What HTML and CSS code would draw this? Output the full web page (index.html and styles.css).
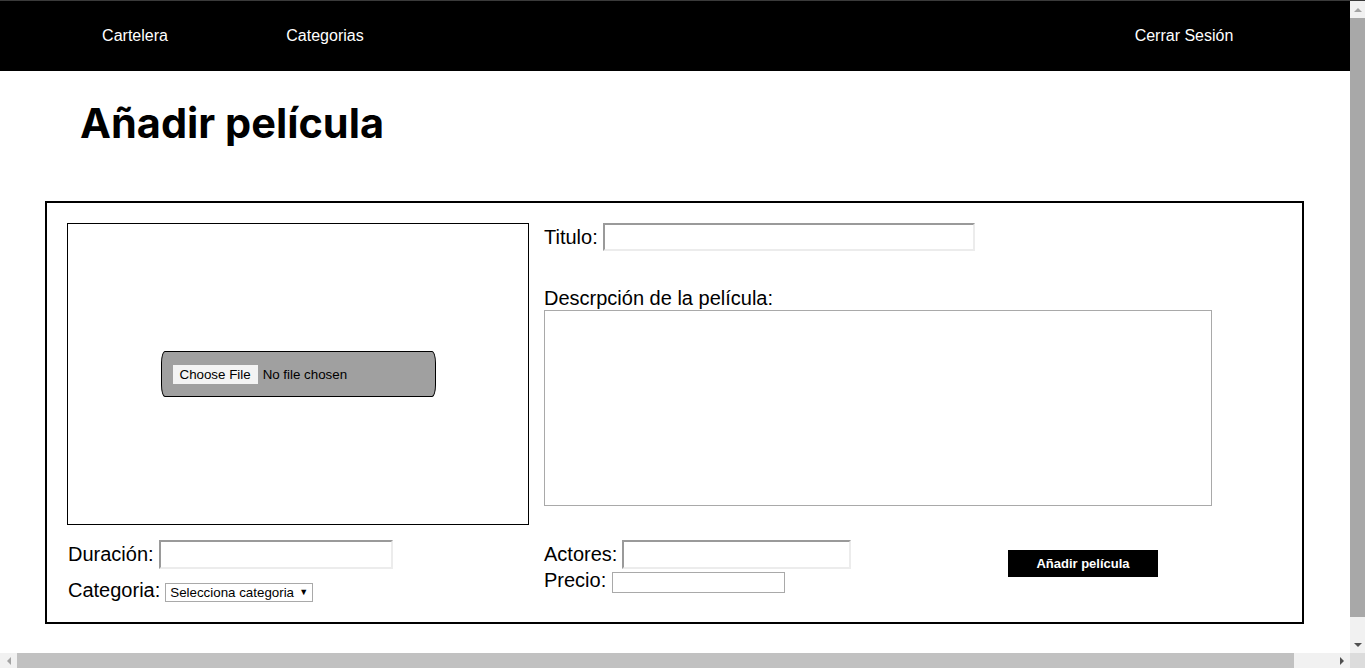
FILE: index.html
```html
<!DOCTYPE html>
<html lang="es">
<head>
<meta charset="utf-8">
<title>Añadir película</title>
<link rel="stylesheet" href="styles.css">
</head>
<body>
<div class="page">
  <nav class="nav">
    <ul class="nav-list">
      <li class="nav-item"><a href="#">Cartelera</a></li>
      <li class="nav-item"><a href="#">Categorias</a></li>
      <li class="nav-item nav-logout"><a href="#">Cerrar Sesión</a></li>
    </ul>
  </nav>
  <h1 class="title">Añadir película</h1>
  <form class="card">
    <div class="image-box">
      <div class="file-wrap">
        <input type="file" class="file-input">
      </div>
    </div>
    <div class="main-fields">
      <div class="row">
        <label>Titulo:</label>
        <input type="text" class="inset-input title-input">
      </div>
      <label class="desc-label">Descrpción de la película:</label>
      <textarea class="desc"></textarea>
    </div>
    <div class="bottom-left">
      <div class="row">
        <label>Duración:</label>
        <input type="text" class="inset-input dur-input">
      </div>
      <div class="row row-cat">
        <label>Categoria:</label>
        <span class="select-wrap">
          <select class="select">
            <option>Selecciona categoria</option>
          </select>
        </span>
      </div>
    </div>
    <div class="bottom-mid">
      <div class="row">
        <label>Actores:</label>
        <input type="text" class="inset-input act-input">
      </div>
      <div class="row row-price">
        <label>Precio:</label>
        <input type="text" class="flat-input">
      </div>
    </div>
    <div class="bottom-right">
      <button type="button" class="submit">Añadir película</button>
    </div>
  </form>
</div>

<div class="vscroll" aria-hidden="true">
  <div class="sb-btn"><span class="arrow arrow-up"></span></div>
  <div class="sb-track sb-track-v"><div class="sb-thumb-v"></div></div>
  <div class="sb-btn"><span class="arrow arrow-down"></span></div>
</div>
<div class="hscroll" aria-hidden="true">
  <div class="sb-btn-h"><span class="arrow arrow-left"></span></div>
  <div class="sb-track sb-track-h"><div class="sb-thumb-h"></div></div>
  <div class="sb-btn-h"><span class="arrow arrow-right"></span></div>
</div>
<div class="sb-corner" aria-hidden="true"></div>
</body>
</html>
```

FILE: styles.css
```css
html {
  background: #fff;
  overflow: hidden;
}
body {
  margin: 0;
  border-top: 1px solid #3a3a3a;
  font-family: "Liberation Sans", Arial, sans-serif;
  color: #000;
}
.page {
  width: 1391px;
  padding-bottom: 48px;
}
.nav {
  background: #000;
  height: 70px;
}
.nav-list {
  list-style: none;
  margin: 0;
  padding: 0 112px 0 40px;
  height: 100%;
  display: flex;
  align-items: center;
}
.nav-item {
  width: 190px;
  text-align: center;
  font-size: 16px;
}
.nav-item a {
  color: #fff;
  text-decoration: none;
}
.nav-logout {
  margin-left: auto;
}
.title {
  margin: 28px 0 54px 80px;
  font-family: Inter, "Noto Sans", sans-serif;
  font-weight: 700;
  font-size: 41.5px;
  line-height: 48px;
  letter-spacing: 0;
}
.card {
  margin-left: 45px;
  width: 1259px;
  box-sizing: border-box;
  border: 2px solid #000;
  padding: 20px;
  display: grid;
  grid-template-columns: 462px 449px 1fr;
  column-gap: 15px;
  row-gap: 15px;
}
.image-box {
  height: 302px;
  box-sizing: border-box;
  border: 1px solid #000;
  display: flex;
  align-items: center;
  justify-content: center;
}
.file-wrap {
  width: 275px;
  height: 46px;
  box-sizing: border-box;
  background: #a0a0a0;
  border: 1px solid #000;
  border-radius: 4px / 12px;
  display: flex;
  align-items: center;
  padding-left: 11px;
  padding-top: 1px;
}
.file-input {
  font-family: "Liberation Sans", Arial, sans-serif;
  font-size: 13.33px;
  color: #000;
  width: 250px;
}
.file-input::file-selector-button {
  font-family: "Liberation Sans", Arial, sans-serif;
  font-size: 13.33px;
  background: #f3f3f3;
  border: none;
  border-radius: 0;
  height: 19px;
  padding: 0 7px;
  margin-right: 5px;
  color: #000;
}
.main-fields {
  grid-column: 2 / 4;
  display: flex;
  flex-direction: column;
  align-items: flex-start;
}
.row {
  display: flex;
  align-items: center;
  gap: 5px;
  font-size: 20px;
  line-height: 23px;
}
.row label {
  white-space: nowrap;
}
.inset-input {
  box-sizing: border-box;
  height: 28px;
  border: 2px solid;
  border-color: #9a9a9a #ececec #ececec #9a9a9a;
  background: #fff;
  padding: 0 4px;
  outline: none;
}
.title-input {
  width: 372px;
}
.desc-label {
  margin-top: 36px;
  font-size: 20px;
  line-height: 23px;
}
.desc {
  display: block;
  width: 668px;
  height: 196px;
  box-sizing: border-box;
  border: 1px solid #a9a9a9;
  resize: none;
  margin: 0;
}
.bottom-left {
  padding-left: 1px;
}
.dur-input {
  width: 234px;
  height: 29px;
}
.row-cat {
  margin-top: 10px;
}
.select-wrap {
  position: relative;
  display: inline-block;
  margin-top: 3px;
}
.select {
  appearance: none;
  -webkit-appearance: none;
  width: 148px;
  height: 19px;
  box-sizing: border-box;
  border: 1px solid #a9a9a9;
  border-radius: 0;
  background: #fff;
  font-family: "Liberation Sans", Arial, sans-serif;
  font-size: 13.33px;
  color: #000;
  padding: 0 0 0 4px;
  display: block;
}
.select-wrap::after {
  content: "\25BC";
  position: absolute;
  right: 5px;
  top: 3px;
  font-size: 9px;
  line-height: 12px;
  color: #000;
  pointer-events: none;
}
.act-input {
  width: 229px;
  height: 29px;
}
.row-price {
  gap: 6px;
  align-items: flex-end;
}
.flat-input {
  box-sizing: border-box;
  width: 173px;
  height: 21px;
  border: 1px solid #a9a9a9;
  background: #fff;
  margin-bottom: -1px;
}
.bottom-right {
  padding-top: 10px;
}
.submit {
  width: 150px;
  height: 27px;
  background: #000;
  color: #fff;
  border: none;
  font-family: "Liberation Sans", Arial, sans-serif;
  font-weight: 700;
  font-size: 13px;
  padding: 0;
  display: block;
}

/* fake browser scrollbars (overlay) */
.vscroll {
  position: fixed;
  top: 1px;
  right: 0;
  width: 15px;
  height: 652px;
  background: #f1f1f1;
  display: flex;
  flex-direction: column;
}
.hscroll {
  position: fixed;
  left: 0;
  bottom: 0;
  width: 1350px;
  height: 15px;
  background: #f1f1f1;
  display: flex;
}
.sb-corner {
  position: fixed;
  right: 0;
  bottom: 0;
  width: 15px;
  height: 15px;
  background: #dcdcdc;
}
.sb-btn {
  height: 17px;
  flex: none;
  display: flex;
  align-items: center;
  justify-content: center;
}
.sb-btn-h {
  width: 17px;
  flex: none;
  display: flex;
  align-items: center;
  justify-content: center;
}
.sb-track {
  flex: 1;
  display: flex;
}
.sb-track-v {
  flex-direction: column;
}
.sb-thumb-v {
  height: 599px;
  background: #a8a8a8;
}
.sb-thumb-h {
  width: 1277px;
  background: #c1c1c1;
}
.arrow {
  width: 0;
  height: 0;
  display: block;
}
.arrow-up {
  border-left: 4px solid transparent;
  border-right: 4px solid transparent;
  border-bottom: 4px solid #a3a3a3;
}
.arrow-down {
  border-left: 4px solid transparent;
  border-right: 4px solid transparent;
  border-top: 4px solid #505050;
}
.arrow-left {
  border-top: 4px solid transparent;
  border-bottom: 4px solid transparent;
  border-right: 4px solid #a3a3a3;
}
.arrow-right {
  border-top: 4px solid transparent;
  border-bottom: 4px solid transparent;
  border-left: 4px solid #505050;
}
```
